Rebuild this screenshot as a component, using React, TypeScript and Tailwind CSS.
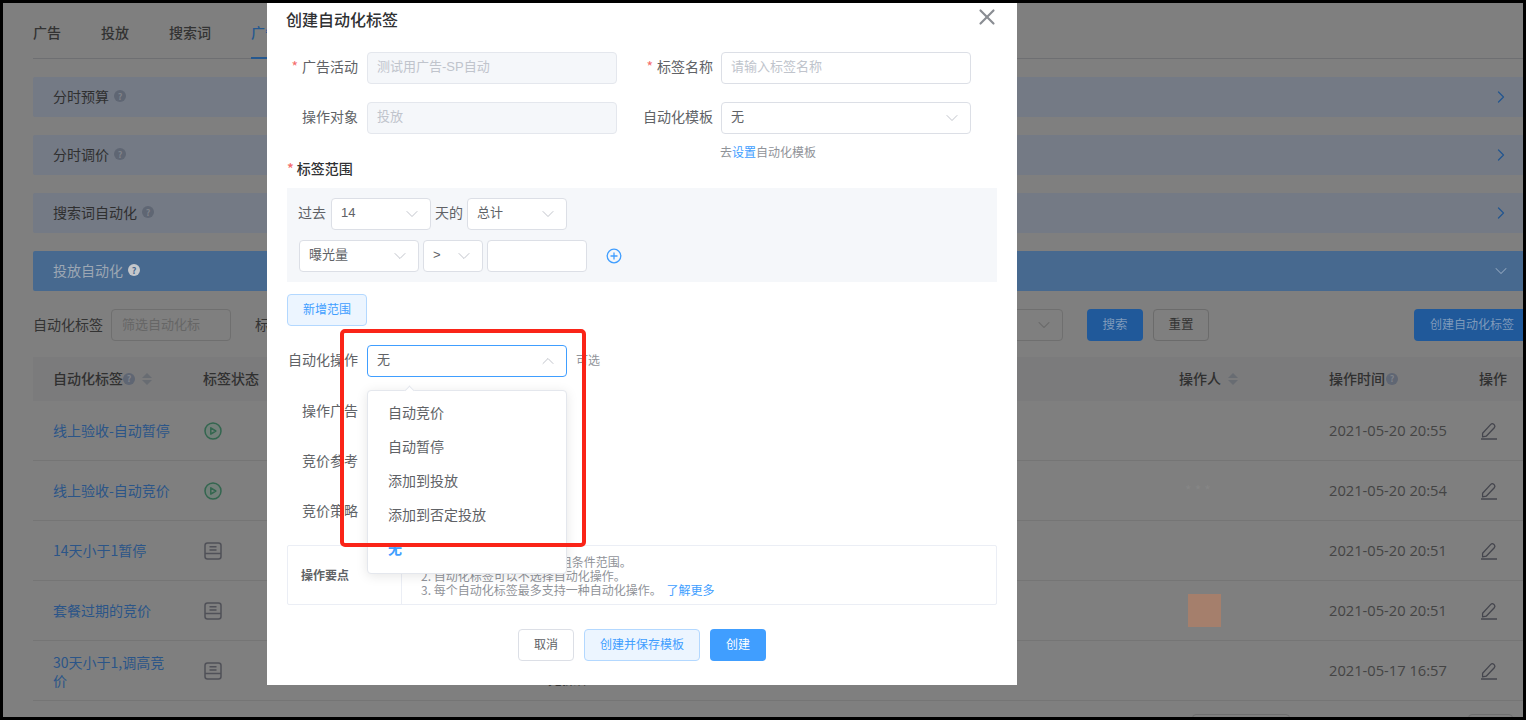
import React from "react";
import { ChevronDown, ChevronUp, ChevronRight, X } from "lucide-react";

function Help({ light }: { light?: boolean }) {
  return (
    <span className={`inline-flex items-center justify-center w-[12px] h-[12px] rounded-full text-[9px] leading-none font-bold ${light ? "bg-[#c4c7cb] text-[#47698f]" : "bg-[#5f6673] text-[#7f828a]"}`}>?</span>
  );
}

function Sort() {
  return (
    <svg width="12" height="14" viewBox="0 0 12 14" className="ml-[6px]">
      <path d="M6 1 L11 6 H1 Z" fill="#686c72" />
      <path d="M6 13 L11 8 H1 Z" fill="#686c72" />
    </svg>
  );
}

function PlayIcon() {
  return (
    <svg width="18" height="18" viewBox="0 0 18 18" fill="#73807a" stroke="#33664f" strokeWidth="1.5">
      <circle cx="9" cy="9" r="8" />
      <path d="M6.8 5.8 L11.8 9 L6.8 12.2 Z" strokeLinejoin="round" />
    </svg>
  );
}

function DraftIcon() {
  return (
    <svg width="18" height="18" viewBox="0 0 18 18" fill="none" stroke="#505158" strokeWidth="1.5">
      <rect x="1" y="1" width="16" height="16" rx="2.5" />
      <path d="M5.5 4.8 H12.5 M5.5 8 H12.5 M1 11.5 H17" />
    </svg>
  );
}

function PencilIcon() {
  return (
    <svg width="18" height="18" viewBox="0 0 18 18" fill="none" stroke="#45464e" strokeWidth="1.3">
      <path d="M2.6 11.2 L10.8 2.4 Q12.2 1 13.7 2.3 L14.3 2.9 Q15.6 4.3 14.3 5.7 L6.2 14.2 L2.6 14.8 Z" strokeLinejoin="round" />
      <path d="M1 17 H17" strokeWidth="1.5" />
    </svg>
  );
}

function Panel({ title, active }: { title: string; active?: boolean }) {
  return (
    <div className={`flex items-center justify-between h-[40px] pl-[20px] pr-[22px] rounded-[2px] ${active ? "bg-[#47698f]" : "bg-[#747a85]"}`}>
      <div className={`flex items-center gap-[5px] text-[14px] pb-[2px] ${active ? "text-[#9da7b3]" : "text-[#2f2f30]"}`}>
        {title}
        <Help light={active} />
      </div>
      {active ? <ChevronDown size={20} strokeWidth={1.25} className="text-[#8ea3bb]" /> : <ChevronRight size={20} strokeWidth={1.5} className="text-[#24568f]" />}
    </div>
  );
}

function Row({ name, icon, time, extra, h2, mid }: { name: React.ReactNode; icon: React.ReactNode; time: string; extra?: React.ReactNode; h2?: boolean; mid?: React.ReactNode }) {
  return (
    <div className="grid grid-cols-[150px_976px_150px_150px_1fr] items-center h-[60px] pl-[20px] border-b border-[#757575] text-[14px]">
      <div className={`text-[#2b5588] ${h2 ? "w-[125px] leading-[18px]" : ""}`}>{name}</div>
      <div className="flex items-center pl-px">{icon}{mid}</div>
      <div>{extra}</div>
      <div className="text-[14.7px] font-['Open_Sans',sans-serif] text-[#444444]">{time}</div>
      <div className="pl-px"><PencilIcon /></div>
    </div>
  );
}

const FIELD_FONT = "font-['Liberation_Sans','Noto_Sans_CJK_SC',sans-serif]";

function Select({ value, w, open }: { value: string; w: string; open?: boolean }) {
  return (
    <div className={`flex items-center justify-between h-[32px] pl-[9px] pr-[8px] bg-white rounded-[4px] border text-[13px] text-[#606266] ${FIELD_FONT} ${w} ${open ? "border-[#409eff]" : "border-[#dcdfe6]"}`}>
      <span className="pb-[3px]">{value}</span>
      {open ? <ChevronUp size={20} strokeWidth={1} className="text-[#b4b8c0]" /> : <ChevronDown size={20} strokeWidth={1} className="text-[#b4b8c0]" />}
    </div>
  );
}

function TextBox({ text, disabled, w }: { text: string; disabled?: boolean; w: string }) {
  return (
    <div className={`flex items-center h-[32px] px-[9px] pb-[3px] rounded-[4px] border text-[13px] text-[#c0c4cc] ${FIELD_FONT} ${w} ${disabled ? "border-[#e4e7ed] bg-[#f5f7fa]" : "border-[#dcdfe6] bg-white"}`}>{text}</div>
  );
}

function Label({ text, req, w }: { text: string; req?: boolean; w: string }) {
  return (
    <div className={`text-right text-[14px] text-[#606266] shrink-0 pb-[3px] ${w}`}>
      {req && <span className="text-[#f56c6c] mr-[4px]">*</span>}
      {text}
    </div>
  );
}

function MenuItem({ text, active }: { text: string; active?: boolean }) {
  return <div className={`flex items-center h-[34px] pl-[20px] pb-[4px] ${active ? "font-bold text-[#409eff]" : ""}`}>{text}</div>;
}

export default function App() {
  return (
    <div className="w-[1526px] h-[720px] bg-black p-[3px] overflow-hidden font-['Noto_Sans_CJK_SC',sans-serif]">
      <div className="relative w-[1520px] h-[714px] bg-[#7f7f7f] overflow-hidden">
        {/* Background page */}
        <div className="w-[1500px] ml-[30px]">
          <div className="flex gap-[40px] border-b border-[#6e6f72] pt-[19px] text-[14px] font-medium text-[#333333] leading-[20px] h-[56px]">
            <span>广告</span>
            <span>投放</span>
            <span>搜索词</span>
            <span className="relative text-[#25588f]">广告自动化<span className="absolute left-0 right-0 top-[35px] h-[2px] bg-[#25588f]" /></span>
          </div>
          <div className="flex flex-col gap-[18px] mt-[18px]">
            <Panel title="分时预算" />
            <Panel title="分时调价" />
            <Panel title="搜索词自动化" />
            <Panel title="投放自动化" active />
          </div>
          <div className="flex items-center h-[32px] mt-[18px] text-[14px]">
            <span className="text-[#333333] w-[78px] pb-[2px]">自动化标签</span>
            <div className="flex items-center w-[120px] h-[32px] px-[10px] pb-[2px] rounded-[4px] border border-[#6f6f6f] text-[#666666] text-[13px] whitespace-nowrap overflow-hidden">筛选自动化标</div>
            <span className="ml-[24px] text-[#333333] pb-[2px]">标签状态</span>
            <div className="ml-[612px] flex items-center justify-end w-[140px] h-[32px] pr-[8px] rounded-[4px] border border-[#6f6f6f]">
              <ChevronDown size={20} strokeWidth={1.25} className="text-[#666666]" />
            </div>
            <div className="ml-[24px] flex items-center justify-center w-[56px] h-[32px] pb-[2px] rounded-[4px] bg-[#20599a] text-[12.5px] text-[#7f9aba]">搜索</div>
            <div className="ml-[10px] flex items-center justify-center w-[56px] h-[32px] pb-[2px] rounded-[4px] border border-[#6b6b6b] text-[12.5px] text-[#333333]">重置</div>
            <div className="ml-[205px] flex items-center justify-center shrink-0 w-[116px] h-[32px] pb-[2px] rounded-[4px] bg-[#20599a] text-[12px] text-[#7f9aba]">创建自动化标签</div>
          </div>
          <div className="grid grid-cols-[150px_976px_150px_150px_1fr] items-center h-[44px] mt-[16px] pl-[20px] pb-px bg-[#7b7b7c] text-[14px] font-medium text-[#303030]">
            <div className="flex items-center">自动化标签<Help /><Sort /></div>
            <div>标签状态</div>
            <div className="flex items-center">操作人<Sort /></div>
            <div className="flex items-center gap-[1px]">操作时间<Help /></div>
            <div>操作</div>
          </div>
          <div>
            <Row name="线上验收-自动暂停" icon={<PlayIcon />} time="2021-05-20 20:55" />
            <Row name="线上验收-自动竞价" icon={<PlayIcon />} time="2021-05-20 20:54" extra={<span className="ml-[6px] text-[#868686]">* * *</span>} />
            <Row name="14天小于1暂停" icon={<DraftIcon />} time="2021-05-20 20:51" />
            <Row name="套餐过期的竞价" icon={<DraftIcon />} time="2021-05-20 20:51" extra={<div className="ml-[9px] w-[33px] h-[33px] bg-[#a57f6c]" />} />
            <Row
              name="30天小于1,调高竞价"
              icon={<DraftIcon />}
              time="2021-05-17 16:57"
              h2
              mid={<span className="ml-[326px] mt-[15px] text-[#333333]">无操作</span>}
            />
          </div>
          <div className="flex mt-[13px] ml-[1159px]">
            <div className="w-[98px] h-[32px] rounded-[4px] border border-[#6f6f6f]" />
            <div className="ml-[178px] w-[45px] h-[32px] rounded-[4px] border border-[#6f6f6f]" />
          </div>
        </div>

        {/* Modal */}
        <div className="absolute left-[264px] top-0 w-[750px] h-[682px] bg-white px-[20px]">
          <div className="h-[34px] -ml-px text-[16px] leading-[32px] font-medium text-[#303133]">创建自动化标签</div>
          <X size={26} strokeWidth={2} className="absolute right-[17px] top-px text-[#8a8d93]" />

          <div className="flex items-center mt-[15px]">
            <Label text="广告活动" req w="w-[71px]" />
            <TextBox text="测试用广告-SP自动" disabled w="ml-[9px] w-[250px]" />
            <Label text="标签名称" req w="w-[96px]" />
            <TextBox text="请输入标签名称" w="ml-[8px] w-[250px]" />
          </div>
          <div className="flex items-center mt-[18px]">
            <Label text="操作对象" w="w-[71px]" />
            <TextBox text="投放" disabled w="ml-[9px] w-[250px]" />
            <Label text="自动化模板" w="w-[96px]" />
            <Select value="无" w="ml-[8px] w-[250px]" />
          </div>
          <div className="ml-[433px] mt-[11px] h-[14px] text-[12px] leading-[14px] text-[#909399]">去<span className="text-[#409eff]">设置</span>自动化模板</div>

          <div className="h-[19px] leading-[19px] text-[14px] font-medium text-[#303133]">
            <span className="text-[#f56c6c] mr-[3px]">*</span>标签范围
          </div>
          <div className="mt-[10px] w-[710px] h-[94px] bg-[#f5f7fa] pt-[10px] pl-[11px]">
            <div className="flex items-center text-[14px] text-[#606266]">
              <span className="w-[33px] pb-[3px]">过去</span>
              <Select value="14" w="w-[100px]" />
              <span className="w-[36px] text-center pb-[3px]">天的</span>
              <Select value="总计" w="w-[100px]" />
            </div>
            <div className="flex items-center mt-[10px] ml-px gap-[4px]">
              <Select value="曝光量" w="w-[120px]" />
              <Select value=">" w="w-[60px]" />
              <div className="w-[100px] h-[32px] rounded-[4px] border border-[#dcdfe6] bg-white" />
              <svg width="16" height="16" viewBox="0 0 16 16" fill="none" stroke="#409eff" strokeWidth="1.3" className="ml-[15px]">
                <circle cx="8" cy="8" r="6.8" />
                <path d="M8 4.5 V11.5 M4.5 8 H11.5" />
              </svg>
            </div>
          </div>
          <div className="mt-[12px] flex items-center justify-center w-[80px] h-[32px] pb-[2px] rounded-[4px] border border-[#b3d8ff] bg-[#ecf5ff] text-[12px] text-[#409eff]">新增范围</div>

          <div className="flex items-center mt-[19px]">
            <Label text="自动化操作" w="w-[71px]" />
            <Select value="无" open w="ml-[9px] w-[200px]" />
            <span className="ml-[9px] pb-[2px] text-[12px] text-[#909399]">可选</span>
          </div>
          <div className="flex items-center h-[32px] mt-[18px] pt-[2px]"><Label text="操作广告" w="w-[71px]" /></div>
          <div className="flex items-center h-[32px] mt-[18px] pt-[2px]"><Label text="竞价参考" w="w-[71px]" /></div>
          <div className="flex items-center h-[32px] mt-[18px] pt-[2px]"><Label text="竞价策略" w="w-[71px]" /></div>

          <div className="flex mt-[18px] w-[710px] h-[60px] border border-[#ebeef5] rounded-[2px]">
            <div className="flex items-center w-[114px] pl-[13px] border-r border-[#ebeef5] text-[12px] font-bold text-[#606266]">操作要点</div>
            <div className="pl-[19px] pt-[9px] text-[12px] leading-[14px] text-[#909399]">
              <div className="pl-[6px]">1. 自动化标签可以设置多组条件范围。</div>
              <div>2. 自动化标签可以不选择自动化操作。</div>
              <div>3. 每个自动化标签最多支持一种自动化操作。 <span className="text-[#409eff] ml-[2px]">了解更多</span></div>
            </div>
          </div>

          <div className="flex justify-center gap-[10px] mt-[24px] text-[12px]">
            <div className="flex items-center justify-center w-[56px] h-[32px] pb-[2px] rounded-[4px] border border-[#dcdfe6] text-[#606266]">取消</div>
            <div className="flex items-center justify-center w-[116px] h-[32px] pb-[2px] rounded-[4px] border border-[#b3d8ff] bg-[#ecf5ff] text-[#409eff]">创建并保存模板</div>
            <div className="flex items-center justify-center w-[56px] h-[32px] pb-[2px] rounded-[4px] bg-[#409eff] text-white">创建</div>
          </div>
        </div>

        {/* Dropdown */}
        <div className="absolute left-[364px] top-[387px] w-[200px] py-[6px] bg-white rounded-[4px] border border-[#e4e7ed] shadow-[0_2px_12px_rgba(0,0,0,0.1)] text-[14px] text-[#606266]">
          <div className="absolute left-[38px] top-[-4px] w-[7px] h-[7px] rotate-45 bg-white border-l border-t border-[#e4e7ed]" />
          <MenuItem text="自动竞价" />
          <MenuItem text="自动暂停" />
          <MenuItem text="添加到投放" />
          <MenuItem text="添加到否定投放" />
          <MenuItem text="无" active />
        </div>

        {/* Red annotation */}
        <div className="absolute left-[337px] top-[326px] w-[246px] h-[218px] border-[4px] border-[#fa2418] rounded-[5px]" />
      </div>
    </div>
  );
}
